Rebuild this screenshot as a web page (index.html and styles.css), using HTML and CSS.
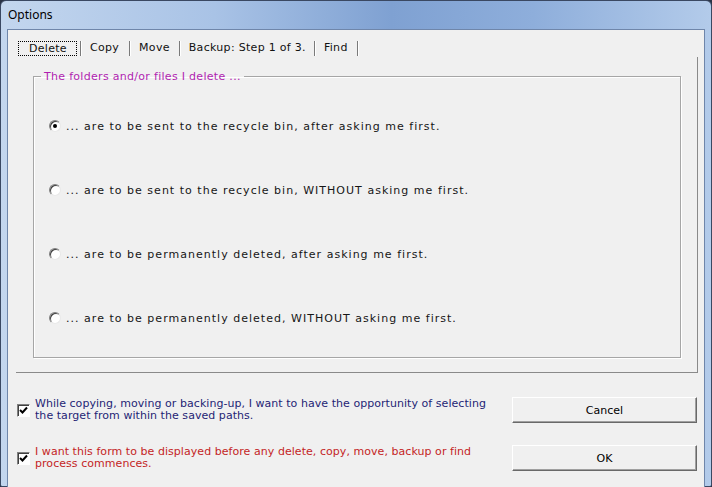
FILE: index.html
```html
<!DOCTYPE html>
<html lang="en">
<head>
  <meta charset="UTF-8">
  <title>Options</title>
  <link rel="stylesheet" href="styles.css">
</head>
<body>

<div class="window">
  <div class="titlebar">Options</div>

  <div class="client">
    <div class="tabs">
      <span class="tab active"><span class="focus">Delete</span></span>
      <span class="tab">Copy</span>
      <span class="tab">Move</span>
      <span class="tab">Backup: Step 1 of 3.</span>
      <span class="tab">Find</span>
    </div>

    <div class="page">
      <fieldset class="group">
        <legend>The folders and/or files I delete ...</legend>
        <label class="option"><span class="radio checked"></span>... are to be sent to the recycle bin, after asking me first.</label>
        <label class="option"><span class="radio"></span>... are to be sent to the recycle bin, WITHOUT asking me first.</label>
        <label class="option"><span class="radio"></span>... are to be permanently deleted, after asking me first.</label>
        <label class="option"><span class="radio"></span>... are to be permanently deleted, WITHOUT asking me first.</label>
      </fieldset>
    </div>

    <div class="footer">
      <div class="row">
        <label class="check blue">
          <span class="box"><svg width="9" height="9" viewBox="0 0 9 9"><path d="M1 4 L3.5 6.5 L8 1.5" fill="none" stroke="#000" stroke-width="2"/></svg></span>
          <span class="text">While copying, moving or backing-up, I want to have the opportunity of selecting the target from within the saved paths.</span>
        </label>
        <button class="button">Cancel</button>
      </div>
      <div class="row">
        <label class="check red">
          <span class="box"><svg width="9" height="9" viewBox="0 0 9 9"><path d="M1 4 L3.5 6.5 L8 1.5" fill="none" stroke="#000" stroke-width="2"/></svg></span>
          <span class="text">I want this form to be displayed before any delete, copy, move, backup or find process commences.</span>
        </label>
        <button class="button">OK</button>
      </div>
    </div>
  </div>
</div>

</body>
</html>
```

FILE: styles.css
```css
* {
  box-sizing: border-box;
}

body {
  margin: 0;
  background: #2a3346;
  font-family: 'DejaVu Sans', Verdana, sans-serif;
  font-size: 11px;
  color: #111;
}

.window {
  width: 712px;
  height: 487px;
  border: 1px solid #3a4862;
  border-radius: 6px 6px 2px 2px;
  padding: 0 6px 6px 6px;
  background: linear-gradient(90deg, #c3d6ee 0%, #a9c3e6 30%, #7fa1d2 55%, #8eaedb 75%, #b3cbea 100%);
  display: flex;
  flex-direction: column;
}

.titlebar {
  height: 28px;
  line-height: 28px;
  padding-left: 1px;
  font-family: 'Noto Sans', sans-serif;
  font-size: 12px;
  color: #000;
}

.client {
  flex: 1;
  background: #f0f0f0;
  border: 1px solid #6f86aa;
}

.tabs {
  display: flex;
  align-items: center;
  height: 18px;
  margin: 9px 0 0 10px;
  letter-spacing: 0.3px;
}

.tab {
  padding: 0 9px;
  border-right: 1px solid #7a7a7a;
  box-shadow: 1px 0 0 #fff;
  height: 15px;
  line-height: 14px;
}

.tab.active {
  padding: 0 3px 0 0;
}

.focus {
  display: inline-block;
  border: 1px dotted #000;
  padding: 0 9px 0 10px;
  line-height: 13px;
}

.tab:nth-child(2) {
  padding-right: 10px;
}

.tab:nth-child(4) {
  padding-right: 8px;
}

.page {
  width: 682px;
  height: 316px;
  margin: 0 0 0 8px;
  border-right: 1px solid #8a8a8a;
  border-bottom: 1px solid #8a8a8a;
  padding: 13px 16px 0 17px;
}

.group {
  margin: 0;
  height: 288px;
  border: 1px solid #a6a6a6;
  box-shadow: inset 1px 1px 0 #fff, 1px 1px 0 #fff;
  padding: 31px 0 0 15px;
}

.group legend {
  color: #b01fb0;
  padding: 0 3px;
  margin-left: -8px;
  letter-spacing: 0.3px;
}

.option {
  display: flex;
  align-items: center;
  height: 64px;
  margin-top: -26px;
  margin-bottom: 26px;
  letter-spacing: 1.02px;
  color: #161616;
}

.option:first-of-type {
  margin-top: -20px;
}

.radio {
  width: 12px;
  height: 12px;
  border-radius: 50%;
  background: #fff;
  border: 1px solid;
  border-color: #808080 #e8e8e8 #e8e8e8 #808080;
  box-shadow: inset 1px 1px 0 #404040;
  margin-right: 5px;
  display: flex;
  align-items: center;
  justify-content: center;
  flex-shrink: 0;
}

.radio.checked::after {
  content: '';
  width: 4px;
  height: 4px;
  border-radius: 50%;
  background: #000;
}

.footer {
  padding: 24px 7px 0 9px;
}

.row {
  display: flex;
  align-items: center;
  justify-content: space-between;
  margin-bottom: 22px;
}

.check {
  display: flex;
  align-items: center;
}

.box {
  width: 13px;
  height: 13px;
  background: #fff;
  border: 1px solid;
  border-color: #808080 #fff #fff #808080;
  box-shadow: inset 1px 1px 0 #404040;
  margin-right: 5px;
  display: flex;
  align-items: center;
  justify-content: center;
  flex-shrink: 0;
}

.text {
  width: 462px;
  line-height: 12px;
  letter-spacing: 0.05px;
}

.blue {
  color: #1f1f75;
}

.red {
  color: #c41f1f;
}

.button {
  width: 185px;
  height: 26px;
  font-family: 'DejaVu Sans', Verdana, sans-serif;
  font-size: 11px;
  color: #000;
  background: #f0f0f0;
  border: 1px solid;
  border-color: #fff #696969 #696969 #fff;
  box-shadow: inset -1px -1px 0 #a0a0a0;
}
```
